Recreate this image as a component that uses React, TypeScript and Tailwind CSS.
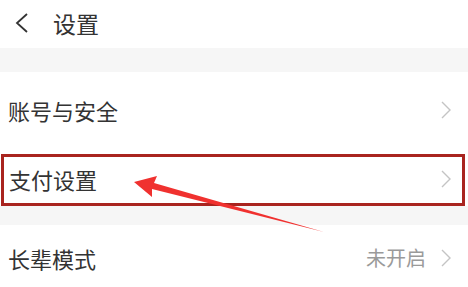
import React from 'react';

const font = { fontFamily: '"Noto Sans CJK SC", "Noto Sans", sans-serif' };

function Chevron() {
  return (
    <svg width="12" height="20" viewBox="0 0 12 20" className="shrink-0">
      <path d="M2 2 L10 10 L2 18" fill="none" stroke="#c4c4c4" strokeWidth="1.4" />
    </svg>
  );
}

export default function App() {
  return (
    <div className="relative w-[468px] h-[287px] overflow-hidden bg-white text-[#333]" style={font}>
      {/* header */}
      <div className="h-[48px] flex items-center pb-[2px]">
        <svg width="16" height="22" viewBox="0 0 16 22" className="ml-[14px]">
          <path d="M13 2 L3 11 L13 20" fill="none" stroke="#333" strokeWidth="1.8" />
        </svg>
        <span className="ml-[23px] text-[23px] leading-none">设置</span>
      </div>
      <div className="h-[24px] bg-[#f6f6f6]" />

      {/* rows */}
      <div className="h-[82px] flex items-center justify-between pl-[8px] pr-[16px] pb-[7px]">
        <span className="text-[22px] leading-none">账号与安全</span>
        <Chevron />
      </div>
      <div className="h-[52px] ml-[1px] mr-[3px] border-[3px] border-[#a9241f] flex items-center justify-between pl-[5px] pr-[10px] pb-[3px]">
        <span className="text-[22px] leading-none">支付设置</span>
        <Chevron />
      </div>
      <div className="h-[19px] bg-[#f6f6f6]" />
      <div className="h-[70px] flex items-center justify-between pl-[8px] pr-[16px] pb-[5px]">
        <span className="text-[22px] leading-none">长辈模式</span>
        <div className="flex items-center gap-[14px]">
          <span className="text-[20px] leading-none text-[#9a9a9a]">未开启</span>
          <Chevron />
        </div>
      </div>

      {/* annotation arrow */}
      <svg className="absolute left-0 top-0 pointer-events-none" width="468" height="287" viewBox="0 0 468 287">
        <polygon points="134,182 157,176 154,183 324,232 152,189 152,197" fill="#f0312f" />
      </svg>
    </div>
  );
}
